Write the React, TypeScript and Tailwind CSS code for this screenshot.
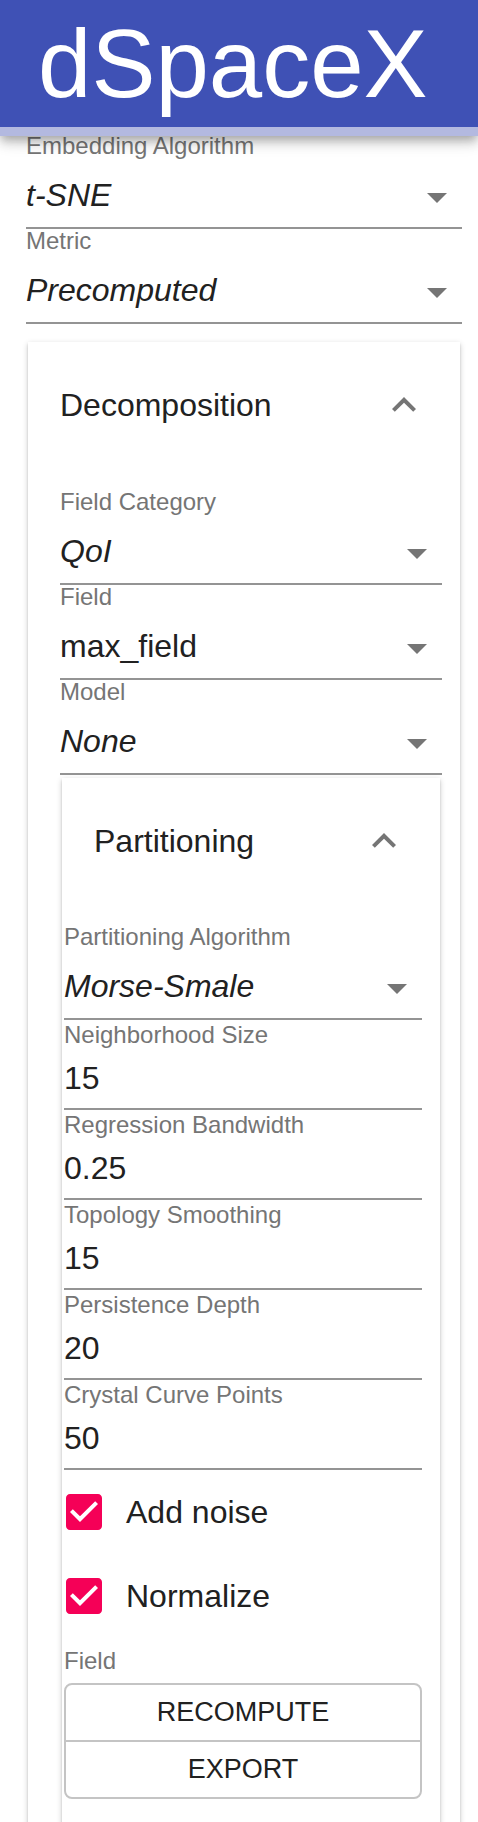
import { clsx } from "clsx";

const font = "font-[family-name:'Liberation_Sans',Arial,sans-serif]";
const labelCls = "block text-[24px] leading-[24px] text-[#757575]";
const valueCls = "text-[32px] leading-[38px] text-[#212121]";
const cardShadow =
  "shadow-[0_2px_6px_0_rgba(0,0,0,0.2),0_2px_2px_0_rgba(0,0,0,0.14),0_4px_2px_-2px_rgba(0,0,0,0.12)]";

function SelectField({ label, value, italic }: { label: string; value: string; italic?: boolean }) {
  return (
    <div className="border-b-2 border-[#949494] pb-[13px]">
      <div className={labelCls}>{label}</div>
      <div className="mt-[18px] flex h-[38px] items-center justify-between pr-[15px]">
        <span className={clsx(valueCls, italic && "italic")}>{value}</span>
        <svg width="20" height="10" viewBox="0 0 20 10" className="mt-[6px]" aria-hidden>
          <path d="M0 0h20L10 10z" fill="#757575" />
        </svg>
      </div>
    </div>
  );
}

function TextField({ label, value }: { label: string; value: string }) {
  return (
    <div className="border-b-2 border-[#949494] pt-[3px] pb-[11px]">
      <div className={labelCls}>{label}</div>
      <div className={clsx("mt-[12px]", valueCls)}>{value}</div>
    </div>
  );
}

function PanelHeader({ title }: { title: string }) {
  return (
    <div className="flex h-[38px] items-center justify-between px-[32px]">
      <span className={valueCls}>{title}</span>
      <svg width="48" height="48" viewBox="0 0 24 24" aria-hidden>
        <path d="M12 8l-6 6 1.41 1.41L12 10.83l4.59 4.58L18 14z" fill="#757575" />
      </svg>
    </div>
  );
}

function CheckRow({ label }: { label: string }) {
  return (
    <div className="flex h-[84px] items-center">
      <svg width="48" height="48" viewBox="0 0 24 24" className="-ml-[4px]" aria-hidden>
        <path
          d="M19 3H5c-1.11 0-2 .9-2 2v14c0 1.1.89 2 2 2h14c1.11 0 2-.9 2-2V5c0-1.1-.89-2-2-2zm-9 14l-5-5 1.41-1.41L10 14.17l7.59-7.59L19 8l-9 9z"
          fill="#f50057"
        />
      </svg>
      <span className={clsx("ml-[18px]", valueCls)}>{label}</span>
    </div>
  );
}

export default function App() {
  return (
    <div className={clsx("min-h-screen overflow-hidden bg-white", font)}>
      {/* app bar */}
      <header className="relative z-10 shadow-[0_4px_8px_-2px_rgba(0,0,0,0.2),0_8px_10px_0_rgba(0,0,0,0.14),0_2px_20px_0_rgba(0,0,0,0.12)]">
        <div className="h-[127px] bg-[#3f51b5] pt-[16px] pl-[38px]">
          <h1 className="text-[96px] leading-[96px] font-normal text-white">dSpaceX</h1>
        </div>
        <div className="h-[9px] bg-[#b3b9e0]" />
      </header>

      <div className="pr-[16px] pl-[26px]">
        <div className="-mt-[2px]">
          <SelectField label="Embedding Algorithm" value="t-SNE" italic />
        </div>
        <SelectField label="Metric" value="Precomputed" italic />
      </div>

      {/* decomposition panel */}
      <div className={clsx("mt-[18px] ml-[28px] w-[432px] bg-white pt-[44px]", cardShadow)}>
        <PanelHeader title="Decomposition" />
        <div className="mt-[66px] pr-[18px] pl-[32px]">
          <SelectField label="Field Category" value="QoI" italic />
          <SelectField label="Field" value="max_field" />
          <SelectField label="Model" value="None" italic />

          {/* partitioning panel */}
          <div className={clsx("mt-[3px] ml-[2px] mr-[2px] bg-white pt-[44px]", cardShadow)}>
            <PanelHeader title="Partitioning" />
            <div className="mt-[65px] pr-[18px] pb-[80px] pl-[2px]">
              <SelectField label="Partitioning Algorithm" value="Morse-Smale" italic />
              <TextField label="Neighborhood Size" value="15" />
              <TextField label="Regression Bandwidth" value="0.25" />
              <TextField label="Topology Smoothing" value="15" />
              <TextField label="Persistence Depth" value="20" />
              <TextField label="Crystal Curve Points" value="50" />
              <CheckRow label="Add noise" />
              <CheckRow label="Normalize" />
              <div className={clsx("mt-[11px]", labelCls)}>Field</div>
              <div className="mt-[10px] overflow-hidden rounded-[8px] border-2 border-[#c4c4c4]">
                <button className="flex h-[55px] w-full items-center justify-center text-[27px] text-[#212121] uppercase">
                  Recompute
                </button>
                <button className="flex h-[57px] w-full items-center justify-center border-t-2 border-[#c4c4c4] text-[27px] text-[#212121] uppercase">
                  Export
                </button>
              </div>
            </div>
          </div>
        </div>
        <div className="h-[40px]" />
      </div>
    </div>
  );
}
